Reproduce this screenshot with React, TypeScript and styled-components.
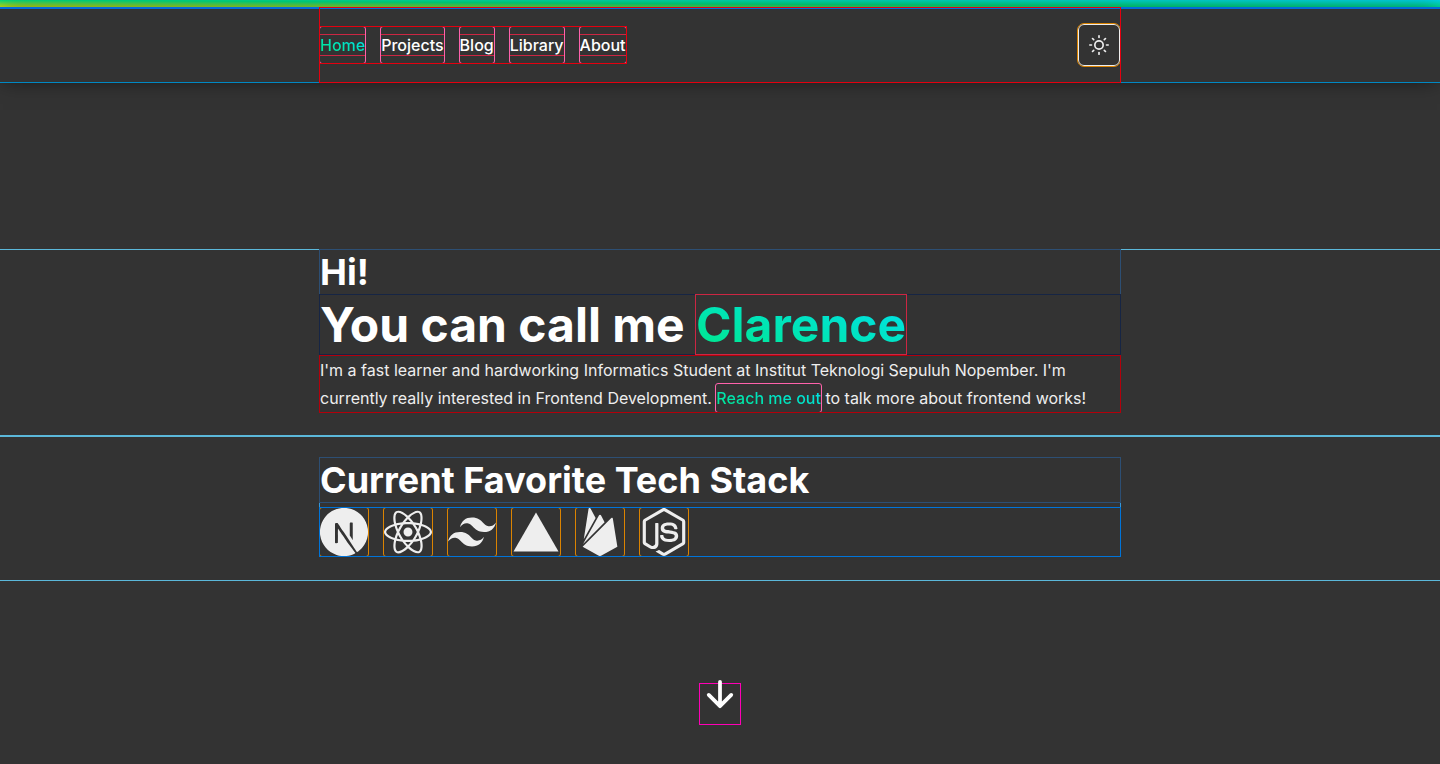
import React from 'react';
import styled, { createGlobalStyle, css } from 'styled-components';
import { SiReact, SiTailwindcss, SiNodedotjs } from 'react-icons/si';
import { FiSun } from 'react-icons/fi';
import { IoArrowDownOutline, IoLogoVercel } from 'react-icons/io5';

const Global = createGlobalStyle`
  *, *::before, *::after { box-sizing: border-box; }
  body {
    margin: 0;
    background: #333;
    color: #fff;
    font-family: Inter, "Liberation Sans", sans-serif;
    font-size: 16px;
    line-height: 24px;
  }
  h1, h2, p, ul { margin: 0; padding: 0; }
  ul { list-style: none; }
`;

const brand = css`
  background: linear-gradient(to top right, #00e887, #00e0f3);
  -webkit-background-clip: text;
  background-clip: text;
  color: transparent;
`;

const Page = styled.div`
  min-height: 100vh;
  display: flex;
  flex-direction: column;
`;

const Header = styled.header`
  position: sticky;
  top: 0;
  z-index: 1;
  outline: 1px solid #0088c3;
`;

const Ribbon = styled.div`
  height: 8px;
  background: linear-gradient(to top right, #dce000, #00da80, #00d2e6);
  outline: 1px solid #036cdb;
`;

const Bar = styled.div`
  background: #333;
  outline: 1px solid #036cdb;
  box-shadow: 0 1px 20px -3px rgba(0, 0, 0, 0.6);
`;

const Column = styled.div`
  position: relative;
  width: 100%;
  max-width: 800px;
  margin: 0 auto;
`;

const Nav = styled(Column).attrs({ as: 'nav' })`
  display: flex;
  align-items: center;
  justify-content: space-between;
  padding: 16px 0;
  outline: 1px solid #e4000f;
`;

const Menu = styled.ul`
  display: flex;
  gap: 16px;
  outline: 1px solid #e4000f;
`;

const MenuLink = styled.a`
  display: block;
  padding: 6px 0;
  border-radius: 2px;
  color: #fff;
  font-weight: 500;
  text-decoration: none;
  outline: 1px solid #ff62ab;
`;

const MenuText = styled.span<{ $active?: boolean }>`
  outline: 1px solid #cc2643;
  ${(p) => p.$active && brand}
`;

const ThemeButton = styled.button`
  width: 42px;
  height: 42px;
  padding: 0;
  display: grid;
  place-items: center;
  border: 1px solid #eee;
  border-radius: 6px;
  outline: 1px solid #da8301;
  background: transparent;
  color: #eee;
`;

const Main = styled.main`
  flex: 1;
  display: flex;
  flex-direction: column;
  padding: 168px 0 40px;
`;

const Section = styled.section<{ $top?: number }>`
  padding: ${(p) => p.$top ?? 0}px 0 24px;
  outline: 1px solid #5bb8da;
`;

/* Children are raised so that their outlines cover the group's own. */
const Group = styled(Column)`
  outline: 1px solid #3498db;

  > * {
    position: relative;
  }
`;

const Heading = styled.h2`
  font-size: 36px;
  line-height: 44px;
  font-weight: 700;
  outline: 1px solid #2d4f74;
`;

const Title = styled.h1`
  margin-top: 1px;
  font-size: 48px;
  line-height: 59px;
  font-weight: 700;
  outline: 1px solid #162544;
`;

const Name = styled.span`
  ${brand}
  position: relative;
  display: inline-block;
  outline: 1px solid #cc2643;
`;

const Intro = styled.p`
  margin-top: 2px;
  line-height: 28px;
  color: #eee;
  outline: 1px solid #b3000b;
`;

const Contact = styled.a`
  display: inline-block;
  border-radius: 2px;
  font-weight: 500;
  text-decoration: none;
  outline: 1px solid #ff62ab;
  ${brand}
`;

const Stack = styled.ul`
  display: flex;
  gap: 16px;
  margin-top: 6px;
  color: #eee;
  outline: 1px solid #0074d9;
`;

const Tech = styled.li`
  display: flex;
  border-radius: 2px;
  outline: 1px solid #da8301;
`;

const Down = styled.a`
  width: 40px;
  height: 40px;
  margin: auto auto 0;
  color: #fff;
  outline: 1px solid #ff00b6;

  svg {
    display: block;
    transform: translateY(-10px);
  }
`;

type IconProps = { size: number; 'aria-label'?: string };

const NextIcon = ({ size, ...rest }: IconProps) => (
  <svg width={size} height={size} viewBox="0 0 24 24" fill="currentColor" role="img" {...rest}>
    <path d="M11.5725 0c-.1763 0-.3098.0013-.3584.0067-.0516.0053-.2159.021-.3636.0328-3.4088.3073-6.6017 2.1463-8.624 4.9728C1.1004 6.584.3802 8.3666.1082 10.255c-.0962.659-.108.8537-.108 1.7474s.012 1.0884.108 1.7476c.652 4.506 3.8591 8.2919 8.2087 9.6945.7789.2511 1.6.4223 2.5337.5255.3636.04 1.9354.04 2.299 0 1.6117-.1783 2.9772-.577 4.3237-1.2643.2065-.1056.2464-.1337.2183-.1573-.0188-.0139-.8987-1.1938-1.9543-2.62l-1.919-2.592-2.4047-3.5583c-1.3231-1.9564-2.4117-3.556-2.4211-3.556-.0094-.0026-.0187 1.5787-.0235 3.509-.0067 3.3802-.0093 3.5162-.0516 3.596-.061.115-.108.1618-.2064.2134-.075.0374-.1408.0445-.495.0445h-.406l-.1078-.068a.4383.4383 0 01-.1572-.1712l-.0493-.1056.0053-4.703.0067-4.7054.0726-.0915c.0376-.0493.1174-.1125.1736-.143.0962-.047.1338-.0517.5396-.0517.4787 0 .5584.0187.6827.1547.0353.0377 1.3373 1.9987 2.895 4.3608a10760.433 10760.433 0 004.7344 7.1706l1.9002 2.8782.096-.0633c.8518-.5536 1.7525-1.3418 2.4657-2.1627 1.5179-1.7429 2.4963-3.868 2.8247-6.134.0961-.6591.1078-.854.1078-1.7475 0-.8937-.012-1.0884-.1078-1.7476-.6522-4.506-3.8592-8.2919-8.2087-9.6945-.7672-.2487-1.5836-.42-2.4985-.5232-.169-.0176-1.0835-.0366-1.6123-.037zm4.0685 7.217c.3473 0 .4082.0053.4857.047.1127.0562.204.1642.237.2767.0186.061.0234 1.3653.0186 4.3044l-.0067 4.2175-.7436-1.14-.7461-1.14v-3.066c0-1.982.0093-3.0963.0234-3.1502.0375-.1313.1196-.2346.2323-.2955.0961-.0494.1313-.054.4997-.054z" />
  </svg>
);

const FirebaseIcon = ({ size, ...rest }: IconProps) => (
  <svg width={size} height={size} viewBox="0 0 24 24" fill="currentColor" role="img" {...rest}>
    <path d="M3.89 15.672L6.255.461A.542.542 0 0 1 7.27.288l2.543 4.771zm16.794 3.692l-2.25-14a.54.54 0 0 0-.919-.295L3.316 19.365l7.856 4.427a1.621 1.621 0 0 0 1.588 0zM14.3 7.147l-1.82-3.482a.542.542 0 0 0-.96 0L3.53 17.984z" />
  </svg>
);

const pages = ['Home', 'Projects', 'Blog', 'Library', 'About'];

const stack = [
  { name: 'Next.js', Icon: NextIcon },
  { name: 'React', Icon: SiReact },
  { name: 'Tailwind CSS', Icon: SiTailwindcss },
  { name: 'Vercel', Icon: IoLogoVercel },
  { name: 'Firebase', Icon: FirebaseIcon },
  { name: 'Node.js', Icon: SiNodedotjs },
];

export default function App() {
  return (
    <Page>
      <Global />
      <Header>
        <Ribbon />
        <Bar>
          <Nav>
            <Menu>
              {pages.map((page, i) => (
                <li key={page}>
                  <MenuLink href={'#' + page.toLowerCase()}>
                    <MenuText $active={i === 0}>{page}</MenuText>
                  </MenuLink>
                </li>
              ))}
            </Menu>
            <ThemeButton type="button" aria-label="Switch theme">
              <FiSun size={20} />
            </ThemeButton>
          </Nav>
        </Bar>
      </Header>
      <Main>
        <Section>
          <Group>
            <Heading>Hi!</Heading>
            <Title>
              You can call me <Name>Clarence</Name>
            </Title>
            <Intro>
              I'm a fast learner and hardworking Informatics Student at Institut Teknologi Sepuluh Nopember. I'm
              currently really interested in Frontend Development. <Contact href="#contact">Reach me out</Contact> to
              talk more about frontend works!
            </Intro>
          </Group>
        </Section>
        <Section $top={22} id="stack">
          <Group>
            <Heading>Current Favorite Tech Stack</Heading>
            <Stack>
              {stack.map(({ name, Icon }) => (
                <Tech key={name}>
                  <Icon size={48} aria-label={name} />
                </Tech>
              ))}
            </Stack>
          </Group>
        </Section>
        <Down href="#stack" aria-label="Scroll down">
          <IoArrowDownOutline size={40} />
        </Down>
      </Main>
    </Page>
  );
}
